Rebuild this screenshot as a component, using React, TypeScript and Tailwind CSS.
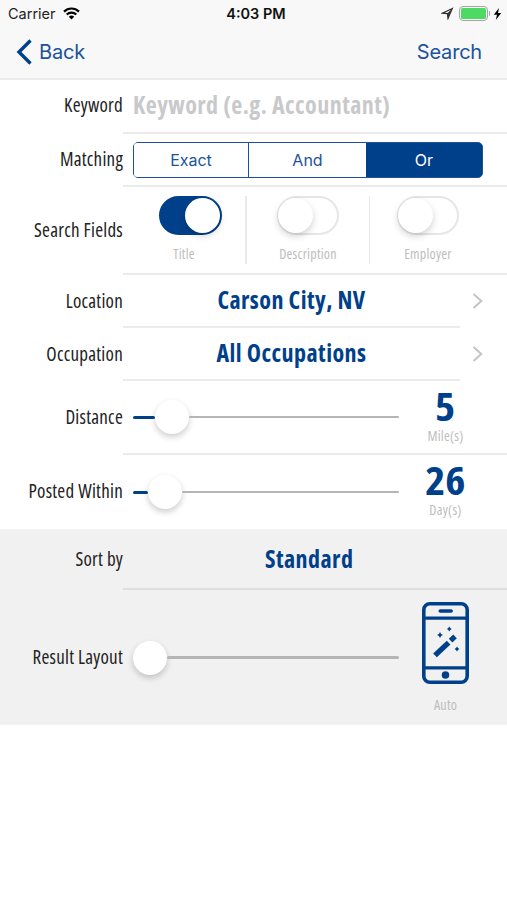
import React from 'react';
import clsx from 'clsx';

const condensed =
  'font-["Open_Sans","Noto_Sans",sans-serif] [font-stretch:75%] tracking-[0.25px]';
const heavy =
  'font-["Open_Sans","Noto_Sans",sans-serif] [font-stretch:75%] font-bold text-[24px] tracking-[0.45px]';

const Label = ({ children }: { children: React.ReactNode }) => (
  <div
    className={clsx(
      'flex w-[123px] shrink-0 items-center justify-end pb-px text-[19px] leading-none whitespace-nowrap text-[#222]',
      condensed
    )}
  >
    {children}
  </div>
);

type RowProps = {
  label: string;
  className: string;
  children: React.ReactNode;
};

const Row = ({ label, className, children }: RowProps) => (
  <div className={clsx('flex', className)}>
    <Label>{label}</Label>
    {children}
  </div>
);

const Toggle = ({ label, on }: { label: string; on?: boolean }) => (
  <div className="flex flex-col items-center">
    <div
      className={clsx(
        'flex h-[39px] items-center rounded-full border-2',
        on
          ? 'w-[63px] justify-end border-[#00408a] bg-[#00408a]'
          : 'w-[62px] border-[#e6e6e6] bg-white'
      )}
    >
      <div
        className={clsx(
          'size-[35px] rounded-full bg-white shadow-[0_3px_7px_rgba(0,0,0,0.18)]',
          !on && '-ml-[1px]'
        )}
      />
    </div>
    <span
      className={clsx(
        'mt-[10px] text-[14px] leading-[18px] text-[#bdbdbd]',
        on && '-ml-3',
        condensed
      )}
    >
      {label}
    </span>
  </div>
);

const Slider = ({ value }: { value: number }) => (
  <div className="flex w-[266px] shrink-0 items-center">
    <div className="h-[3px] rounded-full bg-[#00408a]" style={{ width: value }} />
    <div className="size-[34px] shrink-0 rounded-full bg-white shadow-[0_3px_6px_rgba(0,0,0,0.2)]" />
    <div className="h-[2.5px] flex-1 rounded-full bg-[#b5b5b5]" />
  </div>
);

const Amount = ({ value, unit }: { value: string; unit: string }) => (
  <div className="ml-[6px] flex w-[81px] flex-col items-center">
    <span className='mt-[4px] scale-x-110 font-["Open_Sans","Noto_Sans",sans-serif] text-[39px] leading-[41px] font-bold text-[#00408a] [font-stretch:75%]'>
      {value}
    </span>
    <span className={clsx('text-[14px] leading-[20px] text-[#bdbdbd]', condensed)}>
      {unit}
    </span>
  </div>
);

const Chevron = () => (
  <svg width="11" height="16" viewBox="0 0 11 16" fill="none">
    <path d="M1.5 1L9.3 8L1.5 15" stroke="#c4c4c4" strokeWidth="2" />
  </svg>
);

const PhoneIcon = () => (
  <svg width="47" height="82" viewBox="0 0 47 82" fill="none" stroke="#00408a">
    <rect x="1.8" y="1.8" width="43.4" height="78.4" rx="6" strokeWidth="3.6" />
    <path d="M2 16.2H45M2 65.8H45" strokeWidth="3.2" />
    <path d="M18.2 9H29.2" strokeWidth="3.4" strokeLinecap="round" />
    <circle cx="23.5" cy="73" r="3.8" fill="#00408a" stroke="none" />
    <path d="M13 53.4L26.6 40.6" strokeWidth="5.4" />
    <path d="M28.6 38.6L33 34.4" strokeWidth="5.2" />
    <g fill="#00408a" stroke="none">
      <path d="M18 30L19.1 31.9L21 33L19.1 34.1L18 36L16.9 34.1L15 33L16.9 31.9Z" />
      <path d="M27.3 24.6L28.3 26L29.7 27L28.3 28L27.3 29.4L26.3 28L24.9 27L26.3 26Z" />
      <path d="M35 44.6L36 46L37.4 47L36 48L35 49.4L34 48L32.6 47L34 46Z" />
    </g>
  </svg>
);

const StatusBar = () => (
  <div className="flex h-[27px] items-center text-[14.5px] text-[#222]">
    <div className="flex w-[200px] items-center gap-[7px] pl-2">
      <span>Carrier</span>
      <svg width="17" height="13" viewBox="0 0 17 13" fill="none" stroke="#000">
        <path d="M1 4.6A10.6 10.6 0 0 1 16 4.6" strokeWidth="2.2" />
        <path d="M3.7 7.6A6.8 6.8 0 0 1 13.3 7.6" strokeWidth="2.1" />
        <path d="M8.5 12.6L5.8 9.8A3.8 3.8 0 0 1 11.2 9.8Z" fill="#000" stroke="none" />
      </svg>
    </div>
    <div className="w-[112px] text-center font-semibold text-[#111]">4:03 PM</div>
    <div className="flex flex-1 items-center justify-end pr-[5px]">
      <svg width="13" height="13" viewBox="0 0 13 13" fill="none">
        <path d="M11.3 1.5L1.5 6.2L6.4 6.6L7 11.5Z" stroke="#333" strokeWidth="1.2" />
        <path d="M11.3 1.5L6.2 6.4L7 11.5Z" fill="#333" />
      </svg>
      <div className="ml-[5px] h-[15px] w-[29px] rounded-[4px] border-[1.5px] border-[#a6a6a6] p-[1px]">
        <div className="h-full rounded-[1.5px] bg-[#4cd964]" />
      </div>
      <div className="ml-[1px] h-[5px] w-[1.5px] rounded-r bg-[#a6a6a6]" />
      <svg className="ml-[3px]" width="9" height="12" viewBox="0 0 9 12">
        <path d="M6 0L0.8 6.8H4L2.8 12L8.2 5H5Z" fill="#000" />
      </svg>
    </div>
  </div>
);

const App = () => {
  return (
    <div className="min-h-[900px] w-[507px] overflow-hidden bg-white font-[Inter,Roboto,sans-serif]">
      <header className="h-[80px] border-b-2 border-[#ebebeb] bg-[#f8f8f8]">
        <StatusBar />
        <div className="flex h-[50px] items-center justify-between pr-[25px] pl-4 text-[20px] tracking-[-0.2px] text-[#1b529b]">
          <div className="flex items-center gap-[7px]">
            <svg width="16" height="26" viewBox="0 0 16 26" fill="none">
              <path d="M14.5 1.5L3 13L14.5 24.5" stroke="#00408a" strokeWidth="3.4" />
            </svg>
            <span>Back</span>
          </div>
          <span>Search</span>
        </div>
      </header>

      <Row label="Keyword" className="h-[52px]">
        <div className={clsx('ml-[10px] flex items-center pb-[2px] text-[#c9c9cc]', heavy)}>
          Keyword (e.g. Accountant)
        </div>
      </Row>

      <Row label="Matching" className="h-[55px]">
        <div className="flex flex-1 items-center border-y-2 border-[#ebebeb] pl-[10px]">
          <div className="flex h-[36px] w-[350px] rounded-[5px] border-[1.5px] border-[#1b529b] bg-[#00408a] text-[16px] text-[#1b529b]">
            <div className="flex w-[115px] items-center justify-center rounded-l-[3px] border-r border-[#1b529b] bg-white">Exact</div>
            <div className="flex w-[117px] items-center justify-center bg-white">And</div>
            <div className="flex flex-1 items-center justify-center text-white">Or</div>
          </div>
        </div>
      </Row>

      <Row label="Search Fields" className="h-[88px]">
        <div className="flex flex-1 border-b-2 border-[#ebebeb] pt-[9px]">
          <div className="flex h-[68px] w-[124px] justify-center border-r-2 border-[#ebebeb] pl-3">
            <Toggle label="Title" on />
          </div>
          <div className="flex h-[68px] w-[123px] justify-center border-r border-[#ebebeb]">
            <Toggle label="Description" />
          </div>
          <div className="flex h-[68px] w-[121px] justify-center pr-[6px] pl-px">
            <Toggle label="Employer" />
          </div>
        </div>
      </Row>

      {[
        { label: 'Location', value: 'Carson City, NV' },
        { label: 'Occupation', value: 'All Occupations' },
      ].map((item) => (
        <Row key={item.label} label={item.label} className="h-[53px]">
          <div
            className={clsx(
              'flex w-[337px] items-center justify-center border-b-2 border-[#ebebeb] text-[#00408a]',
              heavy
            )}
          >
            <span className="pb-px">{item.value}</span>
          </div>
          <div className="flex items-center pb-[2px] pl-[12px]">
            <Chevron />
          </div>
        </Row>
      ))}

      <Row label="Distance" className="h-[74px]">
        <div className="flex flex-1 border-b-2 border-[#ebebeb] pl-[10px]">
          <Slider value={22} />
          <Amount value="5" unit="Mile(s)" />
        </div>
      </Row>

      <Row label="Posted Within" className="h-[74px]">
        <div className="flex flex-1 pl-[10px]">
          <Slider value={15} />
          <Amount value="26" unit="Day(s)" />
        </div>
      </Row>

      <div className="bg-[#f1f1f1]">
        <Row label="Sort by" className="h-[61px]">
          <div
            className={clsx(
              'flex flex-1 items-center border-b-2 border-[#dedede] pl-[142px] text-[#00408a]',
              heavy
            )}
          >
            Standard
          </div>
        </Row>
        <Row label="Result Layout" className="h-[135px]">
          <div className="flex flex-1 pl-[10px]">
            <Slider value={0} />
            <div className="ml-[6px] flex w-[81px] flex-col items-center pt-3">
              <PhoneIcon />
              <span className={clsx('mt-3 text-[14px] leading-[18px] text-[#bdbdbd]', condensed)}>
                Auto
              </span>
            </div>
          </div>
        </Row>
      </div>
    </div>
  );
};

export default App;
